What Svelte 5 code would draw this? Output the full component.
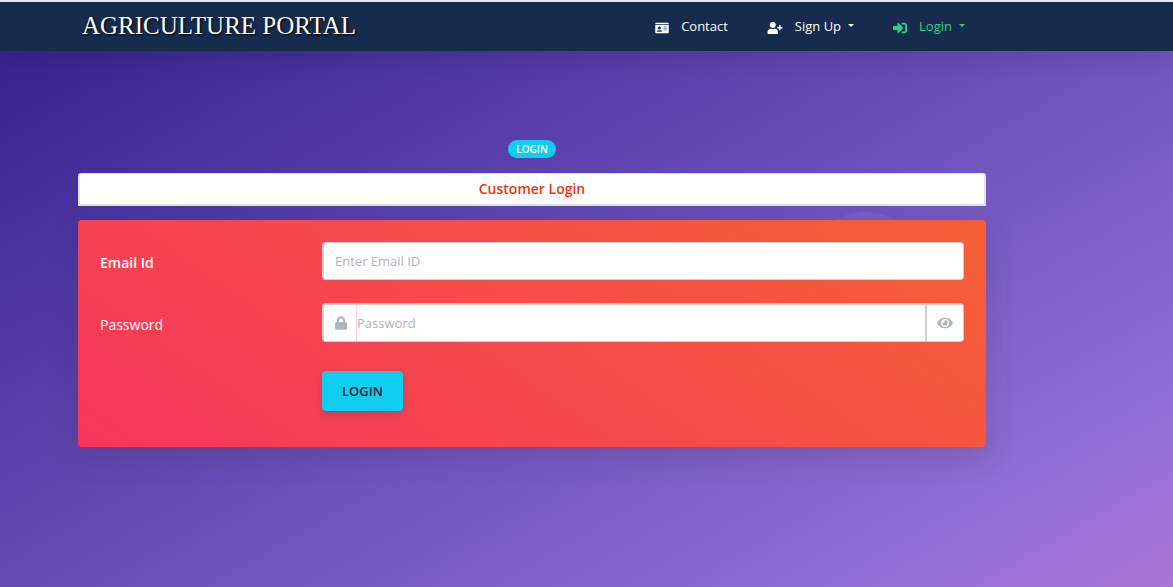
<script>
  let email = $state('');
  let password = $state('');
  let visible = $state(false);
</script>

<div class="page">
  <header class="navbar">
    <a class="brand" href="#home">AGRICULTURE PORTAL</a>
    <nav aria-label="Main">
      <a class="nav-link contact" href="#contact">
        <svg class="card-icon" viewBox="0 0 576 512" aria-hidden="true"><path fill-rule="evenodd" d="M528 32H48C21 32 0 53 0 80v16h576V80c0-27-21-48-48-48zM0 432c0 27 21 48 48 48h480c27 0 48-21 48-48V128H0v304zM352 200h144v28H352v-28zm0 64h144v28H352v-28zm0 64h144v28H352v-28zM176 192a64 64 0 1 1 0 128 64 64 0 0 1 0-128zM66 396c8-26 32-44 60-44h10c24 11 54 11 80 0h10c28 0 52 18 60 44 3 10-6 20-16 20H82c-11 0-19-10-16-20z" /></svg>
        <span>Contact</span>
      </a>
      <a class="nav-link signup" href="#signup">
        <svg class="user-icon" viewBox="0 0 640 512" aria-hidden="true"><path d="M624 208h-64v-64c0-9-7-16-16-16h-32c-9 0-16 7-16 16v64h-64c-9 0-16 7-16 16v32c0 9 7 16 16 16h64v64c0 9 7 16 16 16h32c9 0 16-7 16-16v-64h64c9 0 16-7 16-16v-32c0-9-7-16-16-16zM224 256a128 128 0 1 0 0-256 128 128 0 0 0 0 256zm90 32h-17c-45 21-99 22-146 0h-17C60 288 0 348 0 422v42c0 27 22 48 48 48h352c27 0 48-21 48-48v-42c0-74-60-134-134-134z" /></svg>
        <span>Sign Up</span><i class="caret"></i>
      </a>
      <a class="nav-link login" href="#login">
        <svg class="login-icon" viewBox="0 0 512 512" aria-hidden="true"><path d="M416 448h-84c-7 0-12-5-12-12v-40c0-7 5-12 12-12h84c18 0 32-14 32-32V160c0-18-14-32-32-32h-84c-7 0-12-5-12-12V76c0-7 5-12 12-12h84c53 0 96 43 96 96v192c0 53-43 96-96 96zm-47-209L201 71c-15-15-41-4-41 17v96H24c-13 0-24 11-24 24v96c0 13 11 24 24 24h136v96c0 22 26 32 41 17l168-168c9-9 9-25 0-34z" /></svg>
        <span>Login</span><i class="caret"></i>
      </a>
    </nav>
  </header>

  <main>
    <span class="bubble" aria-hidden="true"></span>
    <span class="badge">LOGIN</span>
    <h1>Customer Login</h1>
    <form onsubmit={(e) => e.preventDefault()}>
      <label class="strong" for="email">Email Id</label>
      <div class="field">
        <input id="email" type="email" placeholder="Enter Email ID" bind:value={email} />
      </div>

      <label for="password">Password</label>
      <div class="field group">
        <span class="addon">
          <svg class="lock-icon" viewBox="0 0 448 512" aria-hidden="true"><path d="M400 224h-24v-72C376 68 308 0 224 0S72 68 72 152v72H48c-27 0-48 22-48 48v192c0 27 21 48 48 48h352c27 0 48-21 48-48V272c0-26-21-48-48-48zm-104 0H152v-72a72 72 0 0 1 144 0v72z" /></svg>
        </span>
        <input id="password" type={visible ? 'text' : 'password'} placeholder="Password" bind:value={password} />
        <button class="reveal" type="button" aria-label="Show password" onclick={() => (visible = !visible)}>
          <svg class="eye-icon" viewBox="0 0 576 512" aria-hidden="true"><path d="M572 241C518 135 411 64 288 64S58 135 4 241a32 32 0 0 0 0 30c54 106 161 177 284 177s230-71 284-177a32 32 0 0 0 0-30zM288 400a144 144 0 1 1 0-288 144 144 0 0 1 0 288zm0-240a95 95 0 0 0-25 4 48 48 0 0 1-67 67 96 96 0 1 0 92-71z" /></svg>
        </button>
      </div>

      <button class="submit" type="submit">LOGIN</button>
    </form>
  </main>
</div>

<style>
  :global(body) {
    margin: 0;
  }

  .page,
  .page * {
    box-sizing: border-box;
  }

  .page {
    min-height: 100vh;
    font-family: 'Open Sans', sans-serif;
    font-size: 14px;
    line-height: 20px;
    color: #fff;
    background: linear-gradient(150deg, #281483 -116px, #8f6ed5 925px, #d782d9 1379px);
  }

  .navbar {
    display: flex;
    align-items: center;
    justify-content: space-between;
    height: 51px;
    padding: 0 208px 2px 82px;
    border-top: 2px solid #e6e8ec;
    background: #172b4d;
    box-shadow: 0 8px 24px rgba(20, 20, 60, 0.14);
  }

  .brand {
    font-family: 'Liberation Serif', serif;
    font-size: 25px;
    line-height: 32px;
    color: #fffff6;
    text-decoration: none;
    white-space: nowrap;
    text-shadow: 1px 1px 2px #000;
  }

  nav {
    display: flex;
    gap: 39px;
  }

  .nav-link {
    display: flex;
    align-items: center;
    color: #fff;
    font-size: 13px;
    text-decoration: none;
    white-space: nowrap;
  }

  .nav-link.login {
    color: #2dce89;
  }

  .nav-link svg {
    margin: 5px 12px 0 0;
  }

  svg {
    display: block;
    height: 12px;
    fill: currentColor;
  }

  .card-icon {
    width: 14px;
  }

  .user-icon {
    width: 16px;
  }

  .login-icon {
    width: 14px;
    height: 14px;
  }

  .caret {
    margin-left: 7px;
    border: 3px solid transparent;
    border-top-color: currentColor;
    border-bottom: 0;
  }

  main {
    position: relative;
    display: flex;
    flex-direction: column;
    align-items: center;
    margin: 0 187px 0 78px;
    padding: 89px 0 40px;
  }

  .bubble {
    position: absolute;
    top: 161px;
    right: 60px;
    width: 120px;
    height: 120px;
    border-radius: 50%;
    background: rgba(255, 255, 255, 0.06);
  }

  .badge {
    padding: 0 8px;
    border-radius: 9px;
    background: #11cdef;
    font-size: 10px;
    font-weight: 600;
    line-height: 18px;
  }

  h1 {
    width: 100%;
    margin: 15px 0 14px;
    padding: 5px;
    border: 2px solid #dee2e6;
    border-top-width: 1px;
    border-radius: 3px 3px 0 0;
    background: #fff;
    color: #e8380d;
    font-size: 14px;
    font-weight: 600;
    line-height: 20px;
    text-align: center;
  }

  form {
    position: relative;
    display: grid;
    grid-template-columns: 222px 1fr;
    row-gap: 23px;
    width: 100%;
    padding: 22px 22px 36px;
    border-radius: 4px;
    background: linear-gradient(35deg, #f5365c, #f56036);
    box-shadow: 0 10px 30px rgba(50, 50, 60, 0.2);
  }

  label {
    padding-top: 12px;
  }

  .strong {
    padding-top: 11px;
    font-weight: 600;
  }

  .field {
    display: flex;
    height: 38px;
    border: 1px solid #cad1d7;
    border-left-width: 2px;
    border-radius: 4px;
    background: #fff;
    color: #adb5bd;
    overflow: hidden;
  }

  .group {
    height: 39px;
    border-top-width: 2px;
  }

  input {
    flex: 1;
    min-width: 0;
    padding: 0 11px;
    border: 0;
    background: transparent;
    font: 13px / 20px 'Open Sans', sans-serif;
    color: #525f7f;
    outline: none;
  }

  input::placeholder {
    color: #adb5bd;
    opacity: 1;
  }

  .group input {
    padding: 0;
  }

  .addon {
    display: grid;
    place-items: center;
    width: 33px;
    padding-left: 2px;
    border-right: 1px solid #fcd5d9;
  }

  .lock-icon {
    width: 12px;
    height: 14px;
  }

  .eye-icon {
    width: 16px;
    height: 14px;
  }

  .reveal {
    display: grid;
    place-items: center;
    width: 38px;
    padding: 0;
    border: 0;
    border-left: 2px solid #cad1d7;
    background: #fff;
    color: #adb5bd;
    cursor: pointer;
  }

  .submit {
    grid-column: 2;
    justify-self: start;
    margin-top: 6px;
    padding: 10px 20px;
    border: 0;
    border-radius: 4px;
    background: #11cdef;
    box-shadow: 0 3px 6px rgba(50, 50, 93, 0.24);
    color: #212529;
    font: 600 13px / 20px 'Open Sans', sans-serif;
    cursor: pointer;
  }
</style>
